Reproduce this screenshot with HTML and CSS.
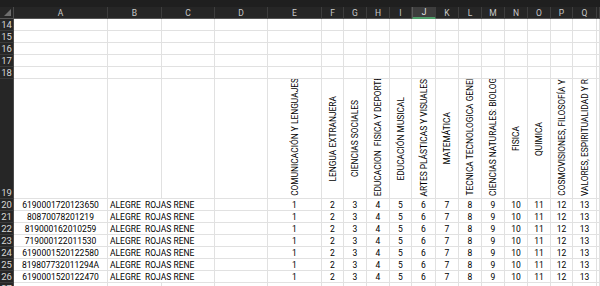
FILE: index.html
```html
<!DOCTYPE html>
<html>
<head>
<meta charset="utf-8">
<link rel="stylesheet" href="styles.css">
</head>
<body>
<div class="sheet">
  <div class="topbar"></div>
  <div class="row head">
    <div class="corner"><span class="tri"></span></div>
    <div class="ch">A</div><div class="ch">B</div><div class="ch">C</div><div class="ch">D</div><div class="ch">E</div><div class="ch">F</div><div class="ch">G</div><div class="ch">H</div><div class="ch">I</div><div class="ch sel">J</div><div class="ch">K</div><div class="ch">L</div><div class="ch">M</div><div class="ch">N</div><div class="ch">O</div><div class="ch">P</div><div class="ch">Q</div><div class="ch"></div>
  </div>

  <div class="row"><div class="rh">14</div><div class="c"></div><div class="c"></div><div class="c"></div><div class="c"></div><div class="c"></div><div class="c"></div><div class="c"></div><div class="c"></div><div class="c"></div><div class="c"></div><div class="c"></div><div class="c"></div><div class="c"></div><div class="c"></div><div class="c"></div><div class="c"></div><div class="c"></div><div class="c"></div></div>
  <div class="row"><div class="rh">15</div><div class="c"></div><div class="c"></div><div class="c"></div><div class="c"></div><div class="c"></div><div class="c"></div><div class="c"></div><div class="c"></div><div class="c"></div><div class="c"></div><div class="c"></div><div class="c"></div><div class="c"></div><div class="c"></div><div class="c"></div><div class="c"></div><div class="c"></div><div class="c"></div></div>
  <div class="row"><div class="rh">16</div><div class="c"></div><div class="c"></div><div class="c"></div><div class="c"></div><div class="c"></div><div class="c"></div><div class="c"></div><div class="c"></div><div class="c"></div><div class="c"></div><div class="c"></div><div class="c"></div><div class="c"></div><div class="c"></div><div class="c"></div><div class="c"></div><div class="c"></div><div class="c"></div></div>
  <div class="row"><div class="rh">17</div><div class="c"></div><div class="c"></div><div class="c"></div><div class="c"></div><div class="c"></div><div class="c"></div><div class="c"></div><div class="c"></div><div class="c"></div><div class="c"></div><div class="c"></div><div class="c"></div><div class="c"></div><div class="c"></div><div class="c"></div><div class="c"></div><div class="c"></div><div class="c"></div></div>
  <div class="row"><div class="rh">18</div><div class="c"></div><div class="c"></div><div class="c"></div><div class="c"></div><div class="c"></div><div class="c"></div><div class="c"></div><div class="c"></div><div class="c"></div><div class="c"></div><div class="c"></div><div class="c"></div><div class="c"></div><div class="c"></div><div class="c"></div><div class="c"></div><div class="c"></div><div class="c"></div></div>

  <div class="row tall">
    <div class="rh">19</div>
    <div class="c"></div><div class="c"></div><div class="c"></div><div class="c"></div>
    <div class="c v"><span>COMUNICACIÓN Y LENGUAJES</span></div>
    <div class="c v"><span>LENGUA EXTRANJERA</span></div>
    <div class="c v"><span>CIENCIAS SOCIALES</span></div>
    <div class="c v"><span>EDUCACION  FISICA Y DEPORTES</span></div>
    <div class="c v"><span>EDUCACIÓN MUSICAL</span></div>
    <div class="c v"><span>ARTES PLÁSTICAS Y VISUALES</span></div>
    <div class="c v"><span>MATEMÁTICA</span></div>
    <div class="c v"><span>TECNICA TECNOLOGICA GENERAL</span></div>
    <div class="c v"><span>CIENCIAS NATURALES: BIOLOGÍA</span></div>
    <div class="c v"><span>FISICA</span></div>
    <div class="c v"><span>QUIMICA</span></div>
    <div class="c v"><span>COSMOVISIONES, FILOSOFÍA Y PSICOLOGÍA</span></div>
    <div class="c v"><span>VALORES, ESPIRITUALIDAD Y RELIGIONES</span></div>
    <div class="c"></div>
  </div>

  <div class="row"><div class="rh">20</div><div class="c">6190001720123650</div><div class="c name">ALEGRE  ROJAS RENE</div><div class="c"></div><div class="c">1</div><div class="c">2</div><div class="c">3</div><div class="c">4</div><div class="c">5</div><div class="c">6</div><div class="c">7</div><div class="c">8</div><div class="c">9</div><div class="c">10</div><div class="c">11</div><div class="c">12</div><div class="c">13</div><div class="c"></div></div>
  <div class="row"><div class="rh">21</div><div class="c">80870078201219</div><div class="c name">ALEGRE  ROJAS RENE</div><div class="c"></div><div class="c">1</div><div class="c">2</div><div class="c">3</div><div class="c">4</div><div class="c">5</div><div class="c">6</div><div class="c">7</div><div class="c">8</div><div class="c">9</div><div class="c">10</div><div class="c">11</div><div class="c">12</div><div class="c">13</div><div class="c"></div></div>
  <div class="row"><div class="rh">22</div><div class="c">819000162010259</div><div class="c name">ALEGRE  ROJAS RENE</div><div class="c"></div><div class="c">1</div><div class="c">2</div><div class="c">3</div><div class="c">4</div><div class="c">5</div><div class="c">6</div><div class="c">7</div><div class="c">8</div><div class="c">9</div><div class="c">10</div><div class="c">11</div><div class="c">12</div><div class="c">13</div><div class="c"></div></div>
  <div class="row"><div class="rh">23</div><div class="c">719000122011530</div><div class="c name">ALEGRE  ROJAS RENE</div><div class="c"></div><div class="c">1</div><div class="c">2</div><div class="c">3</div><div class="c">4</div><div class="c">5</div><div class="c">6</div><div class="c">7</div><div class="c">8</div><div class="c">9</div><div class="c">10</div><div class="c">11</div><div class="c">12</div><div class="c">13</div><div class="c"></div></div>
  <div class="row"><div class="rh">24</div><div class="c">6190001520122580</div><div class="c name">ALEGRE  ROJAS RENE</div><div class="c"></div><div class="c">1</div><div class="c">2</div><div class="c">3</div><div class="c">4</div><div class="c">5</div><div class="c">6</div><div class="c">7</div><div class="c">8</div><div class="c">9</div><div class="c">10</div><div class="c">11</div><div class="c">12</div><div class="c">13</div><div class="c"></div></div>
  <div class="row"><div class="rh">25</div><div class="c">819807732011294A</div><div class="c name">ALEGRE  ROJAS RENE</div><div class="c"></div><div class="c">1</div><div class="c">2</div><div class="c">3</div><div class="c">4</div><div class="c">5</div><div class="c">6</div><div class="c">7</div><div class="c">8</div><div class="c">9</div><div class="c">10</div><div class="c">11</div><div class="c">12</div><div class="c">13</div><div class="c"></div></div>
  <div class="row"><div class="rh">26</div><div class="c">6190001520122470</div><div class="c name">ALEGRE  ROJAS RENE</div><div class="c"></div><div class="c">1</div><div class="c">2</div><div class="c">3</div><div class="c">4</div><div class="c">5</div><div class="c">6</div><div class="c">7</div><div class="c">8</div><div class="c">9</div><div class="c">10</div><div class="c">11</div><div class="c">12</div><div class="c">13</div><div class="c"></div></div>
  <div class="row"><div class="rh">27</div><div class="c"></div><div class="c"></div><div class="c"></div><div class="c"></div><div class="c"></div><div class="c"></div><div class="c"></div><div class="c"></div><div class="c"></div><div class="c"></div><div class="c"></div><div class="c"></div><div class="c"></div><div class="c"></div><div class="c"></div><div class="c"></div><div class="c"></div><div class="c"></div></div>
</div>
</body>
</html>
```
FILE: styles.css
```css
html, body {
  margin: 0;
  padding: 0;
}
body {
  width: 600px;
  height: 286px;
  overflow: hidden;
  background: #ffffff;
  font-family: Roboto, "Liberation Sans", Arial, sans-serif;
}
.sheet {
  display: flex;
  flex-direction: column;
  width: 600px;
}
.topbar {
  height: 7px;
  background: #1f1f1f;
  flex: none;
}
.row {
  display: grid;
  grid-template-columns: 14px 94px 54px 53px 53px 54px 22px 23px 23px 22px 24px 23px 23px 23px 23px 23px 22px 24px 3px;
  height: 12px;
  flex: none;
}
.row.tall {
  height: 120px;
}
.c {
  box-sizing: border-box;
  border-right: 1px solid #e1e1e1;
  border-bottom: 1px solid #e1e1e1;
  display: flex;
  align-items: flex-end;
  justify-content: center;
  font-size: 8.5px;
  line-height: 10px;
  color: #000;
  white-space: nowrap;
  overflow: hidden;
}
.c.name {
  grid-column: span 2;
  justify-content: flex-start;
  padding-left: 2px;
  white-space: pre;
}
.c.v {
  flex-direction: column-reverse;
  align-items: center;
  justify-content: flex-start;
  padding: 2px 0 2px 0;
}
.c.v span {
  margin-top: auto;
  margin-bottom: auto;
  writing-mode: vertical-rl;
  transform: rotate(180deg);
  white-space: pre;
  font-size: 8.4px;
  line-height: 10px;
  flex: none;
}
.rh {
  box-sizing: border-box;
  background: #262626;
  color: #d6d6d6;
  border-right: 1px solid #4a4a4a;
  border-bottom: 1px solid #3a3a3a;
  font-size: 9.5px;
  line-height: 11px;
  display: flex;
  align-items: flex-end;
  justify-content: center;
  overflow: hidden;
}
.head {
  background: #262626;
}
.corner {
  box-sizing: border-box;
  background: #262626;
  border-right: 1px solid #4a4a4a;
  border-bottom: 1px solid #555;
  display: flex;
  align-items: flex-end;
  justify-content: flex-end;
  padding: 0 2px 2px 0;
}
.tri {
  width: 0;
  height: 0;
  border-left: 7px solid transparent;
  border-bottom: 7px solid #6e6e6e;
}
.ch {
  box-sizing: border-box;
  background: #262626;
  color: #c8c8c8;
  border-right: 1px solid #3e3e3e;
  border-bottom: 1px solid #555;
  font-size: 8.5px;
  display: flex;
  align-items: center;
  justify-content: center;
  overflow: hidden;
}
.ch.sel {
  background: #3d3d3d;
  border-left: 1px solid #5a5a5a;
  border-bottom: 2px solid #4f9d69;
  color: #e6e6e6;
}
```
